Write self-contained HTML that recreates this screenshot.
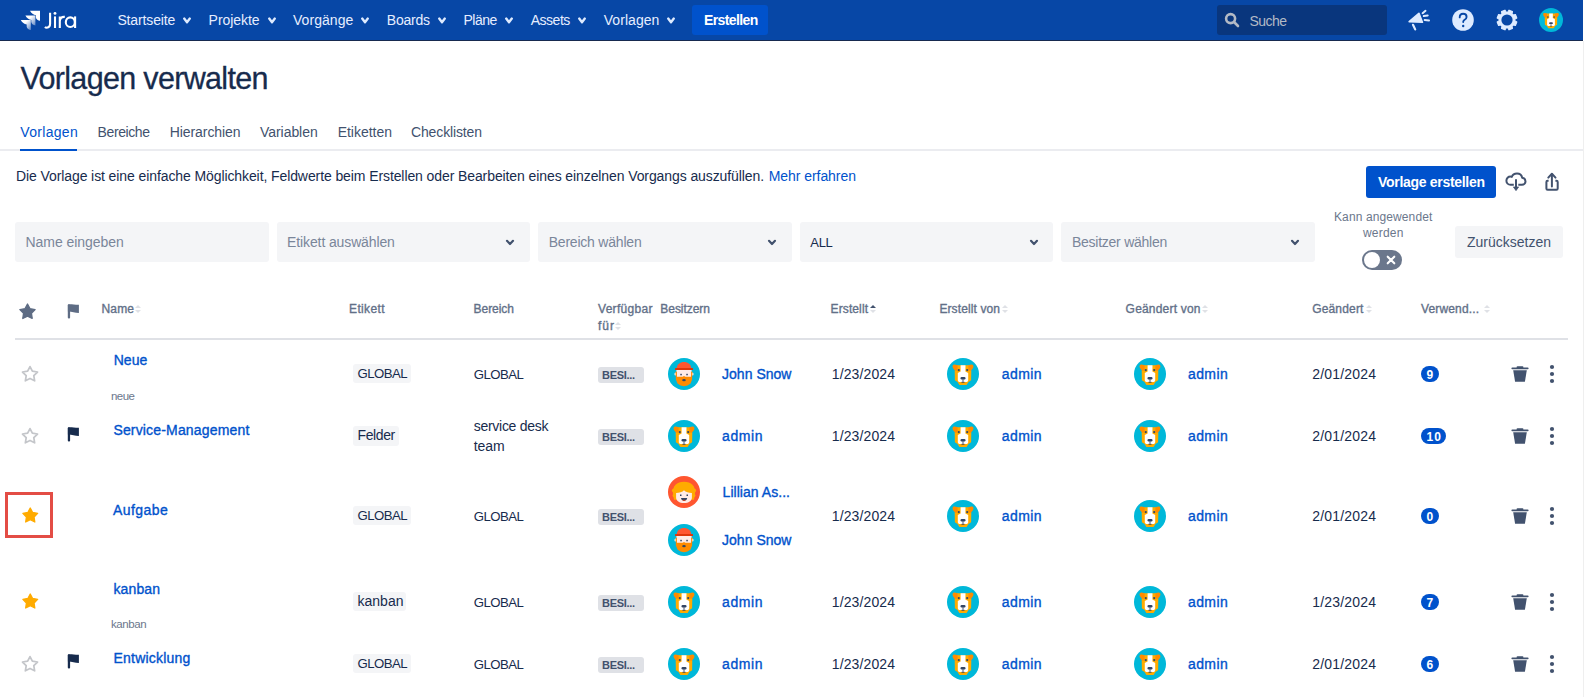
<!DOCTYPE html>
<html><head><meta charset="utf-8"><title>Vorlagen verwalten</title>
<style>
html,body{margin:0;padding:0;background:#fff;}
body{width:1584px;height:697px;overflow:hidden;position:relative;font-family:"Liberation Sans", sans-serif;}
.t{position:absolute;white-space:nowrap;}
.b{position:absolute;}
.s{position:absolute;overflow:visible;}
</style></head><body>
<div class="b" style="left:0px;top:0px;width:1583px;height:40px;background:#0747A6;border-radius:0px;"></div>
<div class="b" style="left:0px;top:40px;width:1583px;height:1px;background:#172A4F;border-radius:0px;"></div>
<div class="b" style="left:1583px;top:41px;width:1px;height:656px;background:#EFEFEF;border-radius:0px;"></div>
<svg class="s" style="left:20px;top:10px;" width="22" height="22" viewBox="0 0 22 22">
<defs><linearGradient id="lg" x1="1" y1="1" x2="0" y2="0"><stop offset="0" stop-color="#fff" stop-opacity="0.35"/><stop offset="0.65" stop-color="#fff"/></linearGradient></defs>
<path transform="translate(10 0.8)" d="M0 0 H10 V10 C8.3 9.8 6 8.6 5.9 6.6 V4.4 C3.6 4 1.2 2.4 0 0 Z" fill="#fff"/>
<path transform="translate(5.4 5.5)" d="M0 0 H10 V10 C8.3 9.8 6 8.6 5.9 6.6 V4.4 C3.6 4 1.2 2.4 0 0 Z" fill="url(#lg)"/>
<path transform="translate(0.8 10.1)" d="M0 0 H10 V10 C8.3 9.8 6 8.6 5.9 6.6 V4.4 C3.6 4 1.2 2.4 0 0 Z" fill="url(#lg)"/>
</svg>
<svg class="s" style="left:40px;top:8px;" width="40" height="24" viewBox="0 0 40 24"><g transform="translate(-40 -8)" fill="none" stroke="#FFFFFF" stroke-width="2.1">
<path d="M50.1 12.8 V23.6 C50.1 26.3 48.7 27.7 46.8 27.7 C46 27.7 45.4 27.4 44.9 26.9"/>
<path d="M55 16.4 V28"/>
<path d="M59.8 16.4 V28 M59.8 21.6 C59.8 18.2 61.6 16.6 64.8 16.9"/>
<ellipse cx="70.3" cy="22.2" rx="4.5" ry="4.85"/>
<path d="M75.1 16.4 V28"/>
</g><circle cx="15" cy="5.4" r="1.45" fill="#FFFFFF"/></svg>
<div class="t" style="left:117.4px;top:11.85px;font-size:14px;line-height:17px;color:#E6EEFF;letter-spacing:-0.127px;">Startseite</div>
<svg class="s" style="left:181px;top:14px;" width="12" height="12" viewBox="0 0 12 12"><path d="M3.2 4.6 L6 8.2 L8.8 4.6" fill="none" stroke="#DEEBFF" stroke-width="2.4" stroke-linecap="round" stroke-linejoin="round"/></svg>
<div class="t" style="left:208.6px;top:11.85px;font-size:14px;line-height:17px;color:#E6EEFF;letter-spacing:-0.051px;">Projekte</div>
<svg class="s" style="left:265.5px;top:14px;" width="12" height="12" viewBox="0 0 12 12"><path d="M3.2 4.6 L6 8.2 L8.8 4.6" fill="none" stroke="#DEEBFF" stroke-width="2.4" stroke-linecap="round" stroke-linejoin="round"/></svg>
<div class="t" style="left:292.9px;top:11.85px;font-size:14px;line-height:17px;color:#E6EEFF;letter-spacing:0.078px;">Vorgänge</div>
<svg class="s" style="left:359.3px;top:14px;" width="12" height="12" viewBox="0 0 12 12"><path d="M3.2 4.6 L6 8.2 L8.8 4.6" fill="none" stroke="#DEEBFF" stroke-width="2.4" stroke-linecap="round" stroke-linejoin="round"/></svg>
<div class="t" style="left:386.8px;top:11.85px;font-size:14px;line-height:17px;color:#E6EEFF;letter-spacing:-0.232px;">Boards</div>
<svg class="s" style="left:435.5px;top:14px;" width="12" height="12" viewBox="0 0 12 12"><path d="M3.2 4.6 L6 8.2 L8.8 4.6" fill="none" stroke="#DEEBFF" stroke-width="2.4" stroke-linecap="round" stroke-linejoin="round"/></svg>
<div class="t" style="left:463.5px;top:11.85px;font-size:14px;line-height:17px;color:#E6EEFF;letter-spacing:-0.478px;">Pläne</div>
<svg class="s" style="left:503px;top:14px;" width="12" height="12" viewBox="0 0 12 12"><path d="M3.2 4.6 L6 8.2 L8.8 4.6" fill="none" stroke="#DEEBFF" stroke-width="2.4" stroke-linecap="round" stroke-linejoin="round"/></svg>
<div class="t" style="left:530.7px;top:11.85px;font-size:14px;line-height:17px;color:#E6EEFF;letter-spacing:-0.483px;">Assets</div>
<svg class="s" style="left:576px;top:14px;" width="12" height="12" viewBox="0 0 12 12"><path d="M3.2 4.6 L6 8.2 L8.8 4.6" fill="none" stroke="#DEEBFF" stroke-width="2.4" stroke-linecap="round" stroke-linejoin="round"/></svg>
<div class="t" style="left:603.7px;top:11.85px;font-size:14px;line-height:17px;color:#E6EEFF;letter-spacing:0.06px;">Vorlagen</div>
<svg class="s" style="left:665px;top:14px;" width="12" height="12" viewBox="0 0 12 12"><path d="M3.2 4.6 L6 8.2 L8.8 4.6" fill="none" stroke="#DEEBFF" stroke-width="2.4" stroke-linecap="round" stroke-linejoin="round"/></svg>
<div class="b" style="left:692px;top:5px;width:76px;height:30px;background:#0052CC;border-radius:3px;"></div>
<div class="t" style="left:704px;top:12.05px;font-size:14px;line-height:17px;color:#FFFFFF;font-weight:700;letter-spacing:-0.605px;">Erstellen</div>
<div class="b" style="left:1217px;top:5px;width:170px;height:30px;background:#09367D;border-radius:3px;"></div>
<svg class="s" style="left:1224px;top:12px;" width="16" height="16" viewBox="0 0 16 16"><circle cx="6.6" cy="6.6" r="4.5" fill="none" stroke="#B3BAC5" stroke-width="2.6"/><path d="M10 10 L14 14" stroke="#B3BAC5" stroke-width="2.6" stroke-linecap="round"/></svg>
<div class="t" style="left:1249.6px;top:13.25px;font-size:14px;line-height:17px;color:#B3BAC5;letter-spacing:-0.576px;">Suche</div>
<svg class="s" style="left:1404px;top:6px;" width="30" height="28" viewBox="0 0 30 28"><path d="M5.2 15.6 L14.9 7.4 L18.4 16.2 Z" fill="#DEEBFF" stroke="#DEEBFF" stroke-width="1.7" stroke-linejoin="round"/>
<path d="M9 18.8 L11.2 23.4" stroke="#DEEBFF" stroke-width="2.2" stroke-linecap="round"/>
<path d="M18.6 7.2 L21.5 4.8 M19.8 10.1 L23.7 9.5 M20.7 14 L25 14.4" stroke="#DEEBFF" stroke-width="2" stroke-linecap="round"/></svg>
<svg class="s" style="left:1452px;top:9px;" width="22" height="22" viewBox="0 0 22 22"><circle cx="11" cy="11" r="10.8" fill="#DEEBFF"/>
<path d="M7.7 8.4 C7.7 6.1 9.2 4.7 11.1 4.7 C13.1 4.7 14.6 6.1 14.6 7.9 C14.6 9.6 13.3 10.4 12.3 11 C11.5 11.5 11.2 12.1 11.2 12.9 V13.1" fill="none" stroke="#0747A6" stroke-width="1.85" stroke-linecap="round"/>
<circle cx="11.2" cy="17" r="1.2" fill="#0747A6"/></svg>
<svg class="s" style="left:1496px;top:9px;" width="22" height="22" viewBox="0 0 22 22"><path d="M18.77 11.67 L20.78 13.10 L19.40 16.42 L16.97 16.02 L16.02 16.97 L16.42 19.40 L13.10 20.78 L11.67 18.77 L10.33 18.77 L8.90 20.78 L5.58 19.40 L5.98 16.97 L5.03 16.02 L2.60 16.42 L1.22 13.10 L3.23 11.67 L3.23 10.33 L1.22 8.90 L2.60 5.58 L5.03 5.98 L5.98 5.03 L5.58 2.60 L8.90 1.22 L10.33 3.23 L11.67 3.23 L13.10 1.22 L16.42 2.60 L16.02 5.03 L16.97 5.98 L19.40 5.58 L20.78 8.90 L18.77 10.33 Z" fill="#DEEBFF" stroke="#DEEBFF" stroke-width="1.2" stroke-linejoin="round"/><circle cx="11" cy="11" r="8.0" fill="#DEEBFF"/><circle cx="11" cy="11" r="5.6" fill="#0747A6"/></svg>
<svg class="s" style="left:1539px;top:8px;" width="24" height="24" viewBox="0 0 32 32"><circle cx="16" cy="16" r="16" fill="#00B8D9"/>
<path d="M9 7.2 H23 L24.3 13 L24.1 22.3 L21.5 24 L19.6 26.9 H12.4 L10.5 24 L7.9 22.3 L7.7 13 Z" fill="#FFAB00"/>
<path d="M5.6 8.5 C5.5 7.2 6.5 6.4 7.7 6.6 L10.6 7.2 L10.6 12.6 L8.3 12.8 C6.8 11.6 5.8 10.1 5.6 8.5 Z" fill="#FF8B00"/>
<path d="M26.4 8.5 C26.5 7.2 25.5 6.4 24.3 6.6 L21.4 7.2 L21.4 12.6 L23.7 12.8 C25.2 11.6 26.2 10.1 26.4 8.5 Z" fill="#FF8B00"/>
<path d="M13.6 7.2 H18.5 L18.4 13.4 L21.2 14.9 V22.6 L20.2 24.1 H11.8 L10.8 22.6 V14.9 L13.6 13.4 Z" fill="#FFFFFF"/>
<circle cx="11.8" cy="12.1" r="1.1" fill="#344563"/><circle cx="20.2" cy="12.1" r="1.1" fill="#344563"/>
<rect x="13.5" y="18.9" width="5" height="2.5" rx="1.2" fill="#344563"/>
<path d="M16 21.2 V23.8 M14.5 24.3 H17.5" stroke="#344563" stroke-width="0.9"/></svg>
<div class="t" style="left:20.5px;top:60.33px;font-size:30.5px;line-height:37px;color:#172B4D;letter-spacing:-0.672px;-webkit-text-stroke:0.3px #172B4D;">Vorlagen verwalten</div>
<div class="t" style="left:20.3px;top:123.65px;font-size:14px;line-height:17px;color:#0052CC;letter-spacing:0.303px;">Vorlagen</div>
<div class="t" style="left:97.6px;top:123.65px;font-size:14px;line-height:17px;color:#42526E;letter-spacing:-0.409px;">Bereiche</div>
<div class="t" style="left:169.8px;top:123.65px;font-size:14px;line-height:17px;color:#42526E;letter-spacing:-0.089px;">Hierarchien</div>
<div class="t" style="left:260px;top:123.65px;font-size:14px;line-height:17px;color:#42526E;letter-spacing:-0.053px;">Variablen</div>
<div class="t" style="left:337.7px;top:123.65px;font-size:14px;line-height:17px;color:#42526E;letter-spacing:-0.023px;">Etiketten</div>
<div class="t" style="left:411px;top:123.65px;font-size:14px;line-height:17px;color:#42526E;letter-spacing:-0.138px;">Checklisten</div>
<div class="b" style="left:0px;top:149px;width:1583px;height:2px;background:#EBECF0;border-radius:0px;"></div>
<div class="b" style="left:20px;top:149px;width:57px;height:2px;background:#0052CC;border-radius:0px;"></div>
<div class="t" style="left:16px;top:167.65px;font-size:14px;line-height:17px;color:#172B4D;letter-spacing:-0.096px;">Die Vorlage ist eine einfache Möglichkeit, Feldwerte beim Erstellen oder Bearbeiten eines einzelnen Vorgangs auszufüllen.</div>
<div class="t" style="left:768.7px;top:167.65px;font-size:14px;line-height:17px;color:#0052CC;letter-spacing:-0.053px;">Mehr erfahren</div>
<div class="b" style="left:1366px;top:166px;width:130px;height:32px;background:#0052CC;border-radius:3px;"></div>
<div class="t" style="left:1378px;top:173.65px;font-size:14px;line-height:17px;color:#FFFFFF;font-weight:700;letter-spacing:-0.3px;">Vorlage erstellen</div>
<svg class="s" style="left:1504px;top:170px;" width="24" height="24" viewBox="0 0 24 24"><path d="M9.8 14.8 H6.5 C4.2 14.8 2.4 13 2.4 10.7 C2.4 8.4 4.2 6.6 6.5 6.6 C7 6.6 7.4 6.7 7.8 6.9 C8.5 4.9 10.5 3.6 13 3.6 C15.6 3.6 17.7 5.4 18.2 7.8 C20.1 8.1 21.5 9.6 21.5 11.4 C21.5 13.3 19.9 14.8 18 14.8 H14.3" fill="none" stroke="#42526E" stroke-width="2" stroke-linejoin="round"/>
<path d="M12 9.3 V17.6" stroke="#42526E" stroke-width="2"/><path d="M9.3 16.9 H14.7 L12 20.7 Z" fill="#42526E" stroke="#42526E" stroke-width="0.6" stroke-linejoin="round"/></svg>
<svg class="s" style="left:1540px;top:170px;" width="24" height="24" viewBox="0 0 24 24"><path d="M8.6 10.8 H7.6 C7 10.8 6.4 11.3 6.4 12 V18.6 C6.4 19.3 7 19.8 7.6 19.8 H16.5 C17.2 19.8 17.7 19.3 17.7 18.6 V12 C17.7 11.3 17.2 10.8 16.5 10.8 H15.4" fill="none" stroke="#42526E" stroke-width="2" stroke-linecap="butt" stroke-linejoin="round"/>
<path d="M11.9 4.6 V16.4" stroke="#42526E" stroke-width="2" stroke-linecap="round"/><path d="M8.3 7.6 L11.9 3.8 L15.5 7.6" fill="none" stroke="#42526E" stroke-width="2" stroke-linecap="round" stroke-linejoin="round"/></svg>
<div class="b" style="left:15px;top:222px;width:253.6px;height:40px;background:#F4F5F7;border-radius:3px;"></div>
<div class="t" style="left:25.5px;top:233.65px;font-size:14px;line-height:17px;color:#7A869A;letter-spacing:-0.038px;">Name eingeben</div>
<div class="b" style="left:276.6px;top:222px;width:253.6px;height:40px;background:#F4F5F7;border-radius:3px;"></div>
<div class="t" style="left:287.1px;top:233.65px;font-size:14px;line-height:17px;color:#7A869A;letter-spacing:-0.121px;">Etikett auswählen</div>
<svg class="s" style="left:504.40000000000003px;top:236.3px;" width="12" height="12" viewBox="0 0 12 12"><path d="M3.0 4.800000000000001 L6 8.0 L9.0 4.800000000000001" fill="none" stroke="#42526E" stroke-width="2.2" stroke-linecap="round" stroke-linejoin="round"/></svg>
<div class="b" style="left:538.2px;top:222px;width:253.6px;height:40px;background:#F4F5F7;border-radius:3px;"></div>
<div class="t" style="left:548.7px;top:233.65px;font-size:14px;line-height:17px;color:#7A869A;letter-spacing:-0.21px;">Bereich wählen</div>
<svg class="s" style="left:766.0px;top:236.3px;" width="12" height="12" viewBox="0 0 12 12"><path d="M3.0 4.800000000000001 L6 8.0 L9.0 4.800000000000001" fill="none" stroke="#42526E" stroke-width="2.2" stroke-linecap="round" stroke-linejoin="round"/></svg>
<div class="b" style="left:799.8px;top:222px;width:253.6px;height:40px;background:#F4F5F7;border-radius:3px;"></div>
<div class="t" style="left:810.3px;top:234.50px;font-size:13px;line-height:16px;color:#172B4D;letter-spacing:-0.32px;">ALL</div>
<svg class="s" style="left:1027.6px;top:236.3px;" width="12" height="12" viewBox="0 0 12 12"><path d="M3.0 4.800000000000001 L6 8.0 L9.0 4.800000000000001" fill="none" stroke="#42526E" stroke-width="2.2" stroke-linecap="round" stroke-linejoin="round"/></svg>
<div class="b" style="left:1061.4px;top:222px;width:253.6px;height:40px;background:#F4F5F7;border-radius:3px;"></div>
<div class="t" style="left:1071.9px;top:233.65px;font-size:14px;line-height:17px;color:#7A869A;letter-spacing:-0.245px;">Besitzer wählen</div>
<svg class="s" style="left:1289.2px;top:236.3px;" width="12" height="12" viewBox="0 0 12 12"><path d="M3.0 4.800000000000001 L6 8.0 L9.0 4.800000000000001" fill="none" stroke="#42526E" stroke-width="2.2" stroke-linecap="round" stroke-linejoin="round"/></svg>
<div class="t" style="left:1334px;top:209.54px;font-size:12px;line-height:14px;color:#6B778C;letter-spacing:0.111px;">Kann angewendet</div>
<div class="t" style="left:1363px;top:226.14px;font-size:12px;line-height:14px;color:#6B778C;letter-spacing:0.208px;">werden</div>
<div class="b" style="left:1362px;top:250px;width:40px;height:20px;background:#6B778C;border-radius:10px;"></div>
<div class="b" style="left:1364px;top:252px;width:16px;height:16px;background:#FFFFFF;border-radius:8px;"></div>
<svg class="s" style="left:1385px;top:254px;" width="12" height="12" viewBox="0 0 12 12"><path d="M2.7 2.7 L9.3 9.3 M9.3 2.7 L2.7 9.3" stroke="#FFFFFF" stroke-width="2.1" stroke-linecap="round"/></svg>
<div class="b" style="left:1455px;top:226px;width:108px;height:32px;background:#F4F5F7;border-radius:3px;"></div>
<div class="t" style="left:1467px;top:233.95px;font-size:14px;line-height:17px;color:#42526E;letter-spacing:-0.004px;">Zurücksetzen</div>
<svg class="s" style="left:18.5px;top:303.3px;" width="17" height="17" viewBox="0 0 17 17"><path d="M8.50 1.01 L10.95 5.63 L16.10 6.53 L12.46 10.29 L13.20 15.46 L8.50 13.16 L3.80 15.46 L4.54 10.29 L0.90 6.53 L6.05 5.63 Z" fill="#5E6C84" stroke="#5E6C84" stroke-width="1.3" stroke-linejoin="round"/></svg>
<svg class="s" style="left:67px;top:304px;" width="13" height="16" viewBox="0 0 13 16"><rect x="0.8" y="0.4" width="2.3" height="14" rx="1" fill="#5E6C84"/><path d="M0.9 0.4 C4 0 8 0.9 11.9 0.8 V8.9 C8 8.9 4.5 7.4 0.9 7.5 Z" fill="#5E6C84"/></svg>
<div class="t" style="left:101.5px;top:301.84px;font-size:12px;line-height:14px;color:#627088;-webkit-text-stroke:0.35px #627088;letter-spacing:0.161px;">Name</div>
<svg class="s" style="left:135.3px;top:305px;" width="6" height="8" viewBox="0 0 6 8"><path d="M0 3 L3 0 L6 3Z" fill="#DFE1E6"/><path d="M0 5 L3 8 L6 5Z" fill="#DFE1E6"/></svg>
<div class="t" style="left:349px;top:301.84px;font-size:12px;line-height:14px;color:#627088;-webkit-text-stroke:0.35px #627088;letter-spacing:0.373px;">Etikett</div>
<div class="t" style="left:473.6px;top:301.84px;font-size:12px;line-height:14px;color:#627088;-webkit-text-stroke:0.35px #627088;letter-spacing:-0.048px;">Bereich</div>
<div class="t" style="left:598px;top:301.84px;font-size:12px;line-height:14px;color:#627088;-webkit-text-stroke:0.35px #627088;letter-spacing:0.294px;">Verfügbar</div>
<div class="t" style="left:660.3px;top:301.84px;font-size:12px;line-height:14px;color:#627088;-webkit-text-stroke:0.35px #627088;letter-spacing:-0.041px;">Besitzern</div>
<div class="t" style="left:830.6px;top:301.84px;font-size:12px;line-height:14px;color:#627088;-webkit-text-stroke:0.35px #627088;letter-spacing:0.102px;">Erstellt</div>
<svg class="s" style="left:870px;top:305px;" width="6" height="8" viewBox="0 0 6 8"><path d="M0 3 L3 0 L6 3Z" fill="#42526E"/><path d="M0 5 L3 8 L6 5Z" fill="#DFE1E6"/></svg>
<div class="t" style="left:939.4px;top:301.84px;font-size:12px;line-height:14px;color:#627088;-webkit-text-stroke:0.35px #627088;letter-spacing:0.113px;">Erstellt von</div>
<svg class="s" style="left:1001.5px;top:305px;" width="6" height="8" viewBox="0 0 6 8"><path d="M0 3 L3 0 L6 3Z" fill="#DFE1E6"/><path d="M0 5 L3 8 L6 5Z" fill="#DFE1E6"/></svg>
<div class="t" style="left:1125.6px;top:301.84px;font-size:12px;line-height:14px;color:#627088;-webkit-text-stroke:0.35px #627088;letter-spacing:0.198px;">Geändert von</div>
<svg class="s" style="left:1202px;top:305px;" width="6" height="8" viewBox="0 0 6 8"><path d="M0 3 L3 0 L6 3Z" fill="#DFE1E6"/><path d="M0 5 L3 8 L6 5Z" fill="#DFE1E6"/></svg>
<div class="t" style="left:1312.2px;top:301.84px;font-size:12px;line-height:14px;color:#627088;-webkit-text-stroke:0.35px #627088;letter-spacing:0.165px;">Geändert</div>
<svg class="s" style="left:1365.5px;top:305px;" width="6" height="8" viewBox="0 0 6 8"><path d="M0 3 L3 0 L6 3Z" fill="#DFE1E6"/><path d="M0 5 L3 8 L6 5Z" fill="#DFE1E6"/></svg>
<div class="t" style="left:1421px;top:301.84px;font-size:12px;line-height:14px;color:#627088;-webkit-text-stroke:0.35px #627088;letter-spacing:0.144px;">Verwend...</div>
<svg class="s" style="left:1484px;top:305px;" width="6" height="8" viewBox="0 0 6 8"><path d="M0 3 L3 0 L6 3Z" fill="#DFE1E6"/><path d="M0 5 L3 8 L6 5Z" fill="#DFE1E6"/></svg>
<div class="t" style="left:598px;top:319.14px;font-size:12px;line-height:14px;color:#627088;-webkit-text-stroke:0.35px #627088;letter-spacing:0.992px;">für</div>
<svg class="s" style="left:615px;top:322px;" width="6" height="8" viewBox="0 0 6 8"><path d="M0 3 L3 0 L6 3Z" fill="#DFE1E6"/><path d="M0 5 L3 8 L6 5Z" fill="#DFE1E6"/></svg>
<div class="b" style="left:15px;top:338px;width:1553px;height:2px;background:#DFE1E6;border-radius:0px;"></div>
<svg class="s" style="left:20.9px;top:365.3px;" width="18" height="18" viewBox="0 0 18 18"><path d="M9.00 1.55 L11.35 6.21 L16.51 7.01 L12.80 10.69 L13.64 15.84 L9.00 13.45 L4.36 15.84 L5.20 10.69 L1.49 7.01 L6.65 6.21 Z" fill="none" stroke="#C4C6CA" stroke-width="1.75" stroke-linejoin="round"/></svg>
<div class="t" style="left:113.7px;top:351.65px;font-size:14px;line-height:17px;color:#0052CC;-webkit-text-stroke:0.35px #0052CC;letter-spacing:0.077px;">Neue</div>
<div class="t" style="left:111px;top:388.72px;font-size:11.5px;line-height:14px;color:#6B778C;letter-spacing:-0.531px;">neue</div>
<div class="b" style="left:353px;top:364px;width:58px;height:19px;background:#F4F5F7;border-radius:3px;"></div>
<div class="t" style="left:357.5px;top:365.93px;font-size:13.2px;line-height:16px;color:#172B4D;letter-spacing:-0.516px;">GLOBAL</div>
<div class="t" style="left:473.7px;top:367.03px;font-size:13.2px;line-height:16px;color:#172B4D;letter-spacing:-0.536px;">GLOBAL</div>
<div class="b" style="left:598px;top:367px;width:46px;height:16px;background:#DFE1E6;border-radius:3px;"></div>
<div class="t" style="left:602px;top:368.69px;font-size:11px;line-height:13px;color:#42526E;font-weight:700;letter-spacing:-0.307px;">BESI...</div>
<svg class="s" style="left:668px;top:358px;" width="32" height="32" viewBox="0 0 32 32"><circle cx="16" cy="16" r="16" fill="#00B8D9"/>
<ellipse cx="7.7" cy="16" rx="1.3" ry="1.6" fill="#FFEBE6"/><ellipse cx="24.3" cy="16" rx="1.3" ry="1.6" fill="#FFEBE6"/>
<rect x="8.4" y="11.5" width="15.2" height="8" fill="#FFEBE6"/>
<path d="M7.6 13.5 L7.9 21.5 L9.5 25.5 L12.5 27.6 L16 28.3 L19.5 27.6 L22.5 25.5 L24.1 21.5 L24.4 13.5 L23.1 13.8 L23.1 18.7 L17.4 18.7 L16 18 L14.6 18.7 L8.9 18.7 L8.9 13.8 Z" fill="#FF8B00"/>
<path d="M8.6 10.8 C9 6 12 3.9 16 3.9 C20 3.9 23 6 23.4 10.8 Z" fill="#FF5630"/>
<rect x="7" y="10" width="18" height="2.1" rx="0.5" fill="#DE350B"/>
<rect x="12.3" y="15.8" width="1.5" height="1.5" fill="#344563"/><rect x="18.3" y="15.8" width="1.5" height="1.5" fill="#344563"/>
<ellipse cx="16" cy="22.2" rx="1.8" ry="1.1" fill="#344563"/></svg>
<div class="t" style="left:722px;top:365.95px;font-size:14px;line-height:17px;color:#0052CC;-webkit-text-stroke:0.35px #0052CC;letter-spacing:0.027px;">John Snow</div>
<div class="t" style="left:831.8px;top:366.25px;font-size:14px;line-height:17px;color:#172B4D;letter-spacing:0.113px;">1/23/2024</div>
<svg class="s" style="left:947px;top:358px;" width="32" height="32" viewBox="0 0 32 32"><circle cx="16" cy="16" r="16" fill="#00B8D9"/>
<path d="M9 7.2 H23 L24.3 13 L24.1 22.3 L21.5 24 L19.6 26.9 H12.4 L10.5 24 L7.9 22.3 L7.7 13 Z" fill="#FFAB00"/>
<path d="M5.6 8.5 C5.5 7.2 6.5 6.4 7.7 6.6 L10.6 7.2 L10.6 12.6 L8.3 12.8 C6.8 11.6 5.8 10.1 5.6 8.5 Z" fill="#FF8B00"/>
<path d="M26.4 8.5 C26.5 7.2 25.5 6.4 24.3 6.6 L21.4 7.2 L21.4 12.6 L23.7 12.8 C25.2 11.6 26.2 10.1 26.4 8.5 Z" fill="#FF8B00"/>
<path d="M13.6 7.2 H18.5 L18.4 13.4 L21.2 14.9 V22.6 L20.2 24.1 H11.8 L10.8 22.6 V14.9 L13.6 13.4 Z" fill="#FFFFFF"/>
<circle cx="11.8" cy="12.1" r="1.1" fill="#344563"/><circle cx="20.2" cy="12.1" r="1.1" fill="#344563"/>
<rect x="13.5" y="18.9" width="5" height="2.5" rx="1.2" fill="#344563"/>
<path d="M16 21.2 V23.8 M14.5 24.3 H17.5" stroke="#344563" stroke-width="0.9"/></svg>
<div class="t" style="left:1001.8px;top:366.25px;font-size:14px;line-height:17px;color:#0052CC;-webkit-text-stroke:0.35px #0052CC;letter-spacing:0.39px;">admin</div>
<svg class="s" style="left:1134px;top:358px;" width="32" height="32" viewBox="0 0 32 32"><circle cx="16" cy="16" r="16" fill="#00B8D9"/>
<path d="M9 7.2 H23 L24.3 13 L24.1 22.3 L21.5 24 L19.6 26.9 H12.4 L10.5 24 L7.9 22.3 L7.7 13 Z" fill="#FFAB00"/>
<path d="M5.6 8.5 C5.5 7.2 6.5 6.4 7.7 6.6 L10.6 7.2 L10.6 12.6 L8.3 12.8 C6.8 11.6 5.8 10.1 5.6 8.5 Z" fill="#FF8B00"/>
<path d="M26.4 8.5 C26.5 7.2 25.5 6.4 24.3 6.6 L21.4 7.2 L21.4 12.6 L23.7 12.8 C25.2 11.6 26.2 10.1 26.4 8.5 Z" fill="#FF8B00"/>
<path d="M13.6 7.2 H18.5 L18.4 13.4 L21.2 14.9 V22.6 L20.2 24.1 H11.8 L10.8 22.6 V14.9 L13.6 13.4 Z" fill="#FFFFFF"/>
<circle cx="11.8" cy="12.1" r="1.1" fill="#344563"/><circle cx="20.2" cy="12.1" r="1.1" fill="#344563"/>
<rect x="13.5" y="18.9" width="5" height="2.5" rx="1.2" fill="#344563"/>
<path d="M16 21.2 V23.8 M14.5 24.3 H17.5" stroke="#344563" stroke-width="0.9"/></svg>
<div class="t" style="left:1188px;top:366.25px;font-size:14px;line-height:17px;color:#0052CC;-webkit-text-stroke:0.35px #0052CC;letter-spacing:0.39px;">admin</div>
<div class="t" style="left:1312.3px;top:366.25px;font-size:14px;line-height:17px;color:#172B4D;letter-spacing:0.175px;">2/01/2024</div>
<div class="b" style="left:1421px;top:366px;width:18px;height:16px;background:#0052CC;border-radius:8px;"></div>
<div class="t" style="left:1426.5px;top:367.84px;font-size:12px;line-height:14px;color:#FFFFFF;font-weight:700;letter-spacing:0.812px;">9</div>
<svg class="s" style="left:1511px;top:365px;" width="18" height="18" viewBox="0 0 18 18"><path d="M1.3 3.3 H16.7" stroke="#42526E" stroke-width="1.8" stroke-linecap="round"/><path d="M6.5 2.3 H11.5" stroke="#42526E" stroke-width="1.9" stroke-linecap="round"/><path d="M2.2 5.3 H15.8 L13.9 16.8 H4.1 Z" fill="#42526E"/></svg>
<svg class="s" style="left:1549px;top:364px;" width="6" height="20" viewBox="0 0 6 20"><circle cx="3" cy="3" r="2.1" fill="#42526E"/><circle cx="3" cy="10" r="2.1" fill="#42526E"/><circle cx="3" cy="17" r="2.1" fill="#42526E"/></svg>
<svg class="s" style="left:20.9px;top:427.1px;" width="18" height="18" viewBox="0 0 18 18"><path d="M9.00 1.55 L11.35 6.21 L16.51 7.01 L12.80 10.69 L13.64 15.84 L9.00 13.45 L4.36 15.84 L5.20 10.69 L1.49 7.01 L6.65 6.21 Z" fill="none" stroke="#C4C6CA" stroke-width="1.75" stroke-linejoin="round"/></svg>
<svg class="s" style="left:67px;top:426.5px;" width="13" height="16" viewBox="0 0 13 16"><rect x="0.8" y="0.4" width="2.3" height="14" rx="1" fill="#172B4D"/><path d="M0.9 0.4 C4 0 8 0.9 11.9 0.8 V8.9 C8 8.9 4.5 7.4 0.9 7.5 Z" fill="#172B4D"/></svg>
<div class="t" style="left:113.4px;top:421.65px;font-size:14px;line-height:17px;color:#0052CC;-webkit-text-stroke:0.35px #0052CC;letter-spacing:0.167px;">Service-Management</div>
<div class="b" style="left:353px;top:426px;width:46px;height:20px;background:#F4F5F7;border-radius:3px;"></div>
<div class="t" style="left:357.5px;top:427.25px;font-size:14px;line-height:17px;color:#172B4D;letter-spacing:-0.397px;">Felder</div>
<div class="t" style="left:473.7px;top:417.65px;font-size:14px;line-height:17px;color:#172B4D;letter-spacing:-0.274px;">service desk</div>
<div class="t" style="left:473.7px;top:437.65px;font-size:14px;line-height:17px;color:#172B4D;letter-spacing:-0.042px;">team</div>
<div class="b" style="left:598px;top:429px;width:46px;height:16px;background:#DFE1E6;border-radius:3px;"></div>
<div class="t" style="left:602px;top:430.69px;font-size:11px;line-height:13px;color:#42526E;font-weight:700;letter-spacing:-0.307px;">BESI...</div>
<svg class="s" style="left:668px;top:420px;" width="32" height="32" viewBox="0 0 32 32"><circle cx="16" cy="16" r="16" fill="#00B8D9"/>
<path d="M9 7.2 H23 L24.3 13 L24.1 22.3 L21.5 24 L19.6 26.9 H12.4 L10.5 24 L7.9 22.3 L7.7 13 Z" fill="#FFAB00"/>
<path d="M5.6 8.5 C5.5 7.2 6.5 6.4 7.7 6.6 L10.6 7.2 L10.6 12.6 L8.3 12.8 C6.8 11.6 5.8 10.1 5.6 8.5 Z" fill="#FF8B00"/>
<path d="M26.4 8.5 C26.5 7.2 25.5 6.4 24.3 6.6 L21.4 7.2 L21.4 12.6 L23.7 12.8 C25.2 11.6 26.2 10.1 26.4 8.5 Z" fill="#FF8B00"/>
<path d="M13.6 7.2 H18.5 L18.4 13.4 L21.2 14.9 V22.6 L20.2 24.1 H11.8 L10.8 22.6 V14.9 L13.6 13.4 Z" fill="#FFFFFF"/>
<circle cx="11.8" cy="12.1" r="1.1" fill="#344563"/><circle cx="20.2" cy="12.1" r="1.1" fill="#344563"/>
<rect x="13.5" y="18.9" width="5" height="2.5" rx="1.2" fill="#344563"/>
<path d="M16 21.2 V23.8 M14.5 24.3 H17.5" stroke="#344563" stroke-width="0.9"/></svg>
<div class="t" style="left:722px;top:428.25px;font-size:14px;line-height:17px;color:#0052CC;-webkit-text-stroke:0.35px #0052CC;letter-spacing:0.615px;">admin</div>
<div class="t" style="left:831.8px;top:428.25px;font-size:14px;line-height:17px;color:#172B4D;letter-spacing:0.113px;">1/23/2024</div>
<svg class="s" style="left:947px;top:420px;" width="32" height="32" viewBox="0 0 32 32"><circle cx="16" cy="16" r="16" fill="#00B8D9"/>
<path d="M9 7.2 H23 L24.3 13 L24.1 22.3 L21.5 24 L19.6 26.9 H12.4 L10.5 24 L7.9 22.3 L7.7 13 Z" fill="#FFAB00"/>
<path d="M5.6 8.5 C5.5 7.2 6.5 6.4 7.7 6.6 L10.6 7.2 L10.6 12.6 L8.3 12.8 C6.8 11.6 5.8 10.1 5.6 8.5 Z" fill="#FF8B00"/>
<path d="M26.4 8.5 C26.5 7.2 25.5 6.4 24.3 6.6 L21.4 7.2 L21.4 12.6 L23.7 12.8 C25.2 11.6 26.2 10.1 26.4 8.5 Z" fill="#FF8B00"/>
<path d="M13.6 7.2 H18.5 L18.4 13.4 L21.2 14.9 V22.6 L20.2 24.1 H11.8 L10.8 22.6 V14.9 L13.6 13.4 Z" fill="#FFFFFF"/>
<circle cx="11.8" cy="12.1" r="1.1" fill="#344563"/><circle cx="20.2" cy="12.1" r="1.1" fill="#344563"/>
<rect x="13.5" y="18.9" width="5" height="2.5" rx="1.2" fill="#344563"/>
<path d="M16 21.2 V23.8 M14.5 24.3 H17.5" stroke="#344563" stroke-width="0.9"/></svg>
<div class="t" style="left:1001.8px;top:428.25px;font-size:14px;line-height:17px;color:#0052CC;-webkit-text-stroke:0.35px #0052CC;letter-spacing:0.39px;">admin</div>
<svg class="s" style="left:1134px;top:420px;" width="32" height="32" viewBox="0 0 32 32"><circle cx="16" cy="16" r="16" fill="#00B8D9"/>
<path d="M9 7.2 H23 L24.3 13 L24.1 22.3 L21.5 24 L19.6 26.9 H12.4 L10.5 24 L7.9 22.3 L7.7 13 Z" fill="#FFAB00"/>
<path d="M5.6 8.5 C5.5 7.2 6.5 6.4 7.7 6.6 L10.6 7.2 L10.6 12.6 L8.3 12.8 C6.8 11.6 5.8 10.1 5.6 8.5 Z" fill="#FF8B00"/>
<path d="M26.4 8.5 C26.5 7.2 25.5 6.4 24.3 6.6 L21.4 7.2 L21.4 12.6 L23.7 12.8 C25.2 11.6 26.2 10.1 26.4 8.5 Z" fill="#FF8B00"/>
<path d="M13.6 7.2 H18.5 L18.4 13.4 L21.2 14.9 V22.6 L20.2 24.1 H11.8 L10.8 22.6 V14.9 L13.6 13.4 Z" fill="#FFFFFF"/>
<circle cx="11.8" cy="12.1" r="1.1" fill="#344563"/><circle cx="20.2" cy="12.1" r="1.1" fill="#344563"/>
<rect x="13.5" y="18.9" width="5" height="2.5" rx="1.2" fill="#344563"/>
<path d="M16 21.2 V23.8 M14.5 24.3 H17.5" stroke="#344563" stroke-width="0.9"/></svg>
<div class="t" style="left:1188px;top:428.25px;font-size:14px;line-height:17px;color:#0052CC;-webkit-text-stroke:0.35px #0052CC;letter-spacing:0.39px;">admin</div>
<div class="t" style="left:1312.3px;top:428.25px;font-size:14px;line-height:17px;color:#172B4D;letter-spacing:0.175px;">2/01/2024</div>
<div class="b" style="left:1421px;top:428px;width:25px;height:16px;background:#0052CC;border-radius:8px;"></div>
<div class="t" style="left:1426.5px;top:429.84px;font-size:12px;line-height:14px;color:#FFFFFF;font-weight:700;letter-spacing:1.141px;">10</div>
<svg class="s" style="left:1511px;top:427px;" width="18" height="18" viewBox="0 0 18 18"><path d="M1.3 3.3 H16.7" stroke="#42526E" stroke-width="1.8" stroke-linecap="round"/><path d="M6.5 2.3 H11.5" stroke="#42526E" stroke-width="1.9" stroke-linecap="round"/><path d="M2.2 5.3 H15.8 L13.9 16.8 H4.1 Z" fill="#42526E"/></svg>
<svg class="s" style="left:1549px;top:426px;" width="6" height="20" viewBox="0 0 6 20"><circle cx="3" cy="3" r="2.1" fill="#42526E"/><circle cx="3" cy="10" r="2.1" fill="#42526E"/><circle cx="3" cy="17" r="2.1" fill="#42526E"/></svg>
<div class="b" style="left:5px;top:492px;width:48px;height:46px;background:transparent;border-radius:0px;border:3px solid #E34D45;box-sizing:border-box;"></div>
<svg class="s" style="left:21.9px;top:507.4px;" width="16.5" height="16.5" viewBox="0 0 16.5 16.5"><path d="M8.25 1.00 L10.63 5.48 L15.63 6.35 L12.09 10.00 L12.81 15.02 L8.25 12.79 L3.69 15.02 L4.41 10.00 L0.87 6.35 L5.87 5.48 Z" fill="#FFAB00" stroke="#FFAB00" stroke-width="1.3" stroke-linejoin="round"/></svg>
<div class="t" style="left:113px;top:501.65px;font-size:14px;line-height:17px;color:#0052CC;-webkit-text-stroke:0.35px #0052CC;letter-spacing:0.421px;">Aufgabe</div>
<div class="b" style="left:353px;top:506px;width:58px;height:19px;background:#F4F5F7;border-radius:3px;"></div>
<div class="t" style="left:357.5px;top:507.93px;font-size:13.2px;line-height:16px;color:#172B4D;letter-spacing:-0.516px;">GLOBAL</div>
<div class="t" style="left:473.7px;top:509.03px;font-size:13.2px;line-height:16px;color:#172B4D;letter-spacing:-0.536px;">GLOBAL</div>
<div class="b" style="left:598px;top:509px;width:46px;height:16px;background:#DFE1E6;border-radius:3px;"></div>
<div class="t" style="left:602px;top:510.69px;font-size:11px;line-height:13px;color:#42526E;font-weight:700;letter-spacing:-0.307px;">BESI...</div>
<svg class="s" style="left:668px;top:476px;" width="32" height="32" viewBox="0 0 32 32"><circle cx="16" cy="16" r="16" fill="#FF5630"/>
<path d="M4.9 17 C4.7 10 8.5 5.8 16 5.8 C23.5 5.8 27.3 10 27.1 17 L26 23.8 L6 23.8 Z" fill="#FFAB00"/>
<circle cx="6" cy="14.5" r="2.1" fill="#FFAB00"/><circle cx="26" cy="14.5" r="2.1" fill="#FFAB00"/>
<circle cx="6.6" cy="19.5" r="2" fill="#FFAB00"/><circle cx="25.4" cy="19.5" r="2" fill="#FFAB00"/>
<path d="M8.1 17.1 C11 17 14.5 16 16 14.3 C17.5 16 21 17 23.9 17.1 L23.9 21.5 C23.9 25 20.6 27 16 27 C11.4 27 8.1 25 8.1 21.5 Z" fill="#FFEBE6"/>
<rect x="12" y="18.5" width="1.5" height="1.5" fill="#344563"/><rect x="18.5" y="18.5" width="1.5" height="1.5" fill="#344563"/>
<path d="M13 22 H19.2 C19.2 23.6 17.8 24.7 16.1 24.7 C14.4 24.7 13 23.6 13 22 Z" fill="#344563"/>
<path d="M14.6 24.2 C15.3 23.6 16.9 23.6 17.6 24.2 C17.1 24.9 15.1 24.9 14.6 24.2 Z" fill="#DE350B"/></svg>
<div class="t" style="left:722.6px;top:484.05px;font-size:14px;line-height:17px;color:#0052CC;-webkit-text-stroke:0.35px #0052CC;letter-spacing:0.039px;">Lillian As...</div>
<svg class="s" style="left:668px;top:524px;" width="32" height="32" viewBox="0 0 32 32"><circle cx="16" cy="16" r="16" fill="#00B8D9"/>
<ellipse cx="7.7" cy="16" rx="1.3" ry="1.6" fill="#FFEBE6"/><ellipse cx="24.3" cy="16" rx="1.3" ry="1.6" fill="#FFEBE6"/>
<rect x="8.4" y="11.5" width="15.2" height="8" fill="#FFEBE6"/>
<path d="M7.6 13.5 L7.9 21.5 L9.5 25.5 L12.5 27.6 L16 28.3 L19.5 27.6 L22.5 25.5 L24.1 21.5 L24.4 13.5 L23.1 13.8 L23.1 18.7 L17.4 18.7 L16 18 L14.6 18.7 L8.9 18.7 L8.9 13.8 Z" fill="#FF8B00"/>
<path d="M8.6 10.8 C9 6 12 3.9 16 3.9 C20 3.9 23 6 23.4 10.8 Z" fill="#FF5630"/>
<rect x="7" y="10" width="18" height="2.1" rx="0.5" fill="#DE350B"/>
<rect x="12.3" y="15.8" width="1.5" height="1.5" fill="#344563"/><rect x="18.3" y="15.8" width="1.5" height="1.5" fill="#344563"/>
<ellipse cx="16" cy="22.2" rx="1.8" ry="1.1" fill="#344563"/></svg>
<div class="t" style="left:722px;top:531.95px;font-size:14px;line-height:17px;color:#0052CC;-webkit-text-stroke:0.35px #0052CC;letter-spacing:0.027px;">John Snow</div>
<div class="t" style="left:831.8px;top:508.25px;font-size:14px;line-height:17px;color:#172B4D;letter-spacing:0.113px;">1/23/2024</div>
<svg class="s" style="left:947px;top:500px;" width="32" height="32" viewBox="0 0 32 32"><circle cx="16" cy="16" r="16" fill="#00B8D9"/>
<path d="M9 7.2 H23 L24.3 13 L24.1 22.3 L21.5 24 L19.6 26.9 H12.4 L10.5 24 L7.9 22.3 L7.7 13 Z" fill="#FFAB00"/>
<path d="M5.6 8.5 C5.5 7.2 6.5 6.4 7.7 6.6 L10.6 7.2 L10.6 12.6 L8.3 12.8 C6.8 11.6 5.8 10.1 5.6 8.5 Z" fill="#FF8B00"/>
<path d="M26.4 8.5 C26.5 7.2 25.5 6.4 24.3 6.6 L21.4 7.2 L21.4 12.6 L23.7 12.8 C25.2 11.6 26.2 10.1 26.4 8.5 Z" fill="#FF8B00"/>
<path d="M13.6 7.2 H18.5 L18.4 13.4 L21.2 14.9 V22.6 L20.2 24.1 H11.8 L10.8 22.6 V14.9 L13.6 13.4 Z" fill="#FFFFFF"/>
<circle cx="11.8" cy="12.1" r="1.1" fill="#344563"/><circle cx="20.2" cy="12.1" r="1.1" fill="#344563"/>
<rect x="13.5" y="18.9" width="5" height="2.5" rx="1.2" fill="#344563"/>
<path d="M16 21.2 V23.8 M14.5 24.3 H17.5" stroke="#344563" stroke-width="0.9"/></svg>
<div class="t" style="left:1001.8px;top:508.25px;font-size:14px;line-height:17px;color:#0052CC;-webkit-text-stroke:0.35px #0052CC;letter-spacing:0.39px;">admin</div>
<svg class="s" style="left:1134px;top:500px;" width="32" height="32" viewBox="0 0 32 32"><circle cx="16" cy="16" r="16" fill="#00B8D9"/>
<path d="M9 7.2 H23 L24.3 13 L24.1 22.3 L21.5 24 L19.6 26.9 H12.4 L10.5 24 L7.9 22.3 L7.7 13 Z" fill="#FFAB00"/>
<path d="M5.6 8.5 C5.5 7.2 6.5 6.4 7.7 6.6 L10.6 7.2 L10.6 12.6 L8.3 12.8 C6.8 11.6 5.8 10.1 5.6 8.5 Z" fill="#FF8B00"/>
<path d="M26.4 8.5 C26.5 7.2 25.5 6.4 24.3 6.6 L21.4 7.2 L21.4 12.6 L23.7 12.8 C25.2 11.6 26.2 10.1 26.4 8.5 Z" fill="#FF8B00"/>
<path d="M13.6 7.2 H18.5 L18.4 13.4 L21.2 14.9 V22.6 L20.2 24.1 H11.8 L10.8 22.6 V14.9 L13.6 13.4 Z" fill="#FFFFFF"/>
<circle cx="11.8" cy="12.1" r="1.1" fill="#344563"/><circle cx="20.2" cy="12.1" r="1.1" fill="#344563"/>
<rect x="13.5" y="18.9" width="5" height="2.5" rx="1.2" fill="#344563"/>
<path d="M16 21.2 V23.8 M14.5 24.3 H17.5" stroke="#344563" stroke-width="0.9"/></svg>
<div class="t" style="left:1188px;top:508.25px;font-size:14px;line-height:17px;color:#0052CC;-webkit-text-stroke:0.35px #0052CC;letter-spacing:0.39px;">admin</div>
<div class="t" style="left:1312.3px;top:508.25px;font-size:14px;line-height:17px;color:#172B4D;letter-spacing:0.175px;">2/01/2024</div>
<div class="b" style="left:1421px;top:508px;width:18px;height:16px;background:#0052CC;border-radius:8px;"></div>
<div class="t" style="left:1426.5px;top:509.84px;font-size:12px;line-height:14px;color:#FFFFFF;font-weight:700;letter-spacing:0.812px;">0</div>
<svg class="s" style="left:1511px;top:507px;" width="18" height="18" viewBox="0 0 18 18"><path d="M1.3 3.3 H16.7" stroke="#42526E" stroke-width="1.8" stroke-linecap="round"/><path d="M6.5 2.3 H11.5" stroke="#42526E" stroke-width="1.9" stroke-linecap="round"/><path d="M2.2 5.3 H15.8 L13.9 16.8 H4.1 Z" fill="#42526E"/></svg>
<svg class="s" style="left:1549px;top:506px;" width="6" height="20" viewBox="0 0 6 20"><circle cx="3" cy="3" r="2.1" fill="#42526E"/><circle cx="3" cy="10" r="2.1" fill="#42526E"/><circle cx="3" cy="17" r="2.1" fill="#42526E"/></svg>
<svg class="s" style="left:21.9px;top:593.4px;" width="16.5" height="16.5" viewBox="0 0 16.5 16.5"><path d="M8.25 1.00 L10.63 5.48 L15.63 6.35 L12.09 10.00 L12.81 15.02 L8.25 12.79 L3.69 15.02 L4.41 10.00 L0.87 6.35 L5.87 5.48 Z" fill="#FFAB00" stroke="#FFAB00" stroke-width="1.3" stroke-linejoin="round"/></svg>
<div class="t" style="left:113.5px;top:580.65px;font-size:14px;line-height:17px;color:#0052CC;-webkit-text-stroke:0.35px #0052CC;letter-spacing:0.113px;">kanban</div>
<div class="t" style="left:111px;top:617.02px;font-size:11.5px;line-height:14px;color:#6B778C;letter-spacing:-0.407px;">kanban</div>
<div class="b" style="left:353px;top:592px;width:53px;height:19px;background:#F4F5F7;border-radius:3px;"></div>
<div class="t" style="left:357.5px;top:593.15px;font-size:14px;line-height:17px;color:#172B4D;letter-spacing:0.013px;">kanban</div>
<div class="t" style="left:473.7px;top:595.03px;font-size:13.2px;line-height:16px;color:#172B4D;letter-spacing:-0.536px;">GLOBAL</div>
<div class="b" style="left:598px;top:595px;width:46px;height:16px;background:#DFE1E6;border-radius:3px;"></div>
<div class="t" style="left:602px;top:596.69px;font-size:11px;line-height:13px;color:#42526E;font-weight:700;letter-spacing:-0.307px;">BESI...</div>
<svg class="s" style="left:668px;top:586px;" width="32" height="32" viewBox="0 0 32 32"><circle cx="16" cy="16" r="16" fill="#00B8D9"/>
<path d="M9 7.2 H23 L24.3 13 L24.1 22.3 L21.5 24 L19.6 26.9 H12.4 L10.5 24 L7.9 22.3 L7.7 13 Z" fill="#FFAB00"/>
<path d="M5.6 8.5 C5.5 7.2 6.5 6.4 7.7 6.6 L10.6 7.2 L10.6 12.6 L8.3 12.8 C6.8 11.6 5.8 10.1 5.6 8.5 Z" fill="#FF8B00"/>
<path d="M26.4 8.5 C26.5 7.2 25.5 6.4 24.3 6.6 L21.4 7.2 L21.4 12.6 L23.7 12.8 C25.2 11.6 26.2 10.1 26.4 8.5 Z" fill="#FF8B00"/>
<path d="M13.6 7.2 H18.5 L18.4 13.4 L21.2 14.9 V22.6 L20.2 24.1 H11.8 L10.8 22.6 V14.9 L13.6 13.4 Z" fill="#FFFFFF"/>
<circle cx="11.8" cy="12.1" r="1.1" fill="#344563"/><circle cx="20.2" cy="12.1" r="1.1" fill="#344563"/>
<rect x="13.5" y="18.9" width="5" height="2.5" rx="1.2" fill="#344563"/>
<path d="M16 21.2 V23.8 M14.5 24.3 H17.5" stroke="#344563" stroke-width="0.9"/></svg>
<div class="t" style="left:722px;top:594.25px;font-size:14px;line-height:17px;color:#0052CC;-webkit-text-stroke:0.35px #0052CC;letter-spacing:0.615px;">admin</div>
<div class="t" style="left:831.8px;top:594.25px;font-size:14px;line-height:17px;color:#172B4D;letter-spacing:0.113px;">1/23/2024</div>
<svg class="s" style="left:947px;top:586px;" width="32" height="32" viewBox="0 0 32 32"><circle cx="16" cy="16" r="16" fill="#00B8D9"/>
<path d="M9 7.2 H23 L24.3 13 L24.1 22.3 L21.5 24 L19.6 26.9 H12.4 L10.5 24 L7.9 22.3 L7.7 13 Z" fill="#FFAB00"/>
<path d="M5.6 8.5 C5.5 7.2 6.5 6.4 7.7 6.6 L10.6 7.2 L10.6 12.6 L8.3 12.8 C6.8 11.6 5.8 10.1 5.6 8.5 Z" fill="#FF8B00"/>
<path d="M26.4 8.5 C26.5 7.2 25.5 6.4 24.3 6.6 L21.4 7.2 L21.4 12.6 L23.7 12.8 C25.2 11.6 26.2 10.1 26.4 8.5 Z" fill="#FF8B00"/>
<path d="M13.6 7.2 H18.5 L18.4 13.4 L21.2 14.9 V22.6 L20.2 24.1 H11.8 L10.8 22.6 V14.9 L13.6 13.4 Z" fill="#FFFFFF"/>
<circle cx="11.8" cy="12.1" r="1.1" fill="#344563"/><circle cx="20.2" cy="12.1" r="1.1" fill="#344563"/>
<rect x="13.5" y="18.9" width="5" height="2.5" rx="1.2" fill="#344563"/>
<path d="M16 21.2 V23.8 M14.5 24.3 H17.5" stroke="#344563" stroke-width="0.9"/></svg>
<div class="t" style="left:1001.8px;top:594.25px;font-size:14px;line-height:17px;color:#0052CC;-webkit-text-stroke:0.35px #0052CC;letter-spacing:0.39px;">admin</div>
<svg class="s" style="left:1134px;top:586px;" width="32" height="32" viewBox="0 0 32 32"><circle cx="16" cy="16" r="16" fill="#00B8D9"/>
<path d="M9 7.2 H23 L24.3 13 L24.1 22.3 L21.5 24 L19.6 26.9 H12.4 L10.5 24 L7.9 22.3 L7.7 13 Z" fill="#FFAB00"/>
<path d="M5.6 8.5 C5.5 7.2 6.5 6.4 7.7 6.6 L10.6 7.2 L10.6 12.6 L8.3 12.8 C6.8 11.6 5.8 10.1 5.6 8.5 Z" fill="#FF8B00"/>
<path d="M26.4 8.5 C26.5 7.2 25.5 6.4 24.3 6.6 L21.4 7.2 L21.4 12.6 L23.7 12.8 C25.2 11.6 26.2 10.1 26.4 8.5 Z" fill="#FF8B00"/>
<path d="M13.6 7.2 H18.5 L18.4 13.4 L21.2 14.9 V22.6 L20.2 24.1 H11.8 L10.8 22.6 V14.9 L13.6 13.4 Z" fill="#FFFFFF"/>
<circle cx="11.8" cy="12.1" r="1.1" fill="#344563"/><circle cx="20.2" cy="12.1" r="1.1" fill="#344563"/>
<rect x="13.5" y="18.9" width="5" height="2.5" rx="1.2" fill="#344563"/>
<path d="M16 21.2 V23.8 M14.5 24.3 H17.5" stroke="#344563" stroke-width="0.9"/></svg>
<div class="t" style="left:1188px;top:594.25px;font-size:14px;line-height:17px;color:#0052CC;-webkit-text-stroke:0.35px #0052CC;letter-spacing:0.39px;">admin</div>
<div class="t" style="left:1312.3px;top:594.25px;font-size:14px;line-height:17px;color:#172B4D;letter-spacing:0.175px;">1/23/2024</div>
<div class="b" style="left:1421px;top:594px;width:18px;height:16px;background:#0052CC;border-radius:8px;"></div>
<div class="t" style="left:1426.5px;top:595.84px;font-size:12px;line-height:14px;color:#FFFFFF;font-weight:700;letter-spacing:0.812px;">7</div>
<svg class="s" style="left:1511px;top:593px;" width="18" height="18" viewBox="0 0 18 18"><path d="M1.3 3.3 H16.7" stroke="#42526E" stroke-width="1.8" stroke-linecap="round"/><path d="M6.5 2.3 H11.5" stroke="#42526E" stroke-width="1.9" stroke-linecap="round"/><path d="M2.2 5.3 H15.8 L13.9 16.8 H4.1 Z" fill="#42526E"/></svg>
<svg class="s" style="left:1549px;top:592px;" width="6" height="20" viewBox="0 0 6 20"><circle cx="3" cy="3" r="2.1" fill="#42526E"/><circle cx="3" cy="10" r="2.1" fill="#42526E"/><circle cx="3" cy="17" r="2.1" fill="#42526E"/></svg>
<svg class="s" style="left:20.9px;top:655.3px;" width="18" height="18" viewBox="0 0 18 18"><path d="M9.00 1.55 L11.35 6.21 L16.51 7.01 L12.80 10.69 L13.64 15.84 L9.00 13.45 L4.36 15.84 L5.20 10.69 L1.49 7.01 L6.65 6.21 Z" fill="none" stroke="#C4C6CA" stroke-width="1.75" stroke-linejoin="round"/></svg>
<svg class="s" style="left:67px;top:654px;" width="13" height="16" viewBox="0 0 13 16"><rect x="0.8" y="0.4" width="2.3" height="14" rx="1" fill="#172B4D"/><path d="M0.9 0.4 C4 0 8 0.9 11.9 0.8 V8.9 C8 8.9 4.5 7.4 0.9 7.5 Z" fill="#172B4D"/></svg>
<div class="t" style="left:113.5px;top:649.65px;font-size:14px;line-height:17px;color:#0052CC;-webkit-text-stroke:0.35px #0052CC;letter-spacing:0.22px;">Entwicklung</div>
<div class="b" style="left:353px;top:654px;width:58px;height:19px;background:#F4F5F7;border-radius:3px;"></div>
<div class="t" style="left:357.5px;top:655.93px;font-size:13.2px;line-height:16px;color:#172B4D;letter-spacing:-0.516px;">GLOBAL</div>
<div class="t" style="left:473.7px;top:657.03px;font-size:13.2px;line-height:16px;color:#172B4D;letter-spacing:-0.536px;">GLOBAL</div>
<div class="b" style="left:598px;top:657px;width:46px;height:16px;background:#DFE1E6;border-radius:3px;"></div>
<div class="t" style="left:602px;top:658.69px;font-size:11px;line-height:13px;color:#42526E;font-weight:700;letter-spacing:-0.307px;">BESI...</div>
<svg class="s" style="left:668px;top:648px;" width="32" height="32" viewBox="0 0 32 32"><circle cx="16" cy="16" r="16" fill="#00B8D9"/>
<path d="M9 7.2 H23 L24.3 13 L24.1 22.3 L21.5 24 L19.6 26.9 H12.4 L10.5 24 L7.9 22.3 L7.7 13 Z" fill="#FFAB00"/>
<path d="M5.6 8.5 C5.5 7.2 6.5 6.4 7.7 6.6 L10.6 7.2 L10.6 12.6 L8.3 12.8 C6.8 11.6 5.8 10.1 5.6 8.5 Z" fill="#FF8B00"/>
<path d="M26.4 8.5 C26.5 7.2 25.5 6.4 24.3 6.6 L21.4 7.2 L21.4 12.6 L23.7 12.8 C25.2 11.6 26.2 10.1 26.4 8.5 Z" fill="#FF8B00"/>
<path d="M13.6 7.2 H18.5 L18.4 13.4 L21.2 14.9 V22.6 L20.2 24.1 H11.8 L10.8 22.6 V14.9 L13.6 13.4 Z" fill="#FFFFFF"/>
<circle cx="11.8" cy="12.1" r="1.1" fill="#344563"/><circle cx="20.2" cy="12.1" r="1.1" fill="#344563"/>
<rect x="13.5" y="18.9" width="5" height="2.5" rx="1.2" fill="#344563"/>
<path d="M16 21.2 V23.8 M14.5 24.3 H17.5" stroke="#344563" stroke-width="0.9"/></svg>
<div class="t" style="left:722px;top:656.25px;font-size:14px;line-height:17px;color:#0052CC;-webkit-text-stroke:0.35px #0052CC;letter-spacing:0.615px;">admin</div>
<div class="t" style="left:831.8px;top:656.25px;font-size:14px;line-height:17px;color:#172B4D;letter-spacing:0.113px;">1/23/2024</div>
<svg class="s" style="left:947px;top:648px;" width="32" height="32" viewBox="0 0 32 32"><circle cx="16" cy="16" r="16" fill="#00B8D9"/>
<path d="M9 7.2 H23 L24.3 13 L24.1 22.3 L21.5 24 L19.6 26.9 H12.4 L10.5 24 L7.9 22.3 L7.7 13 Z" fill="#FFAB00"/>
<path d="M5.6 8.5 C5.5 7.2 6.5 6.4 7.7 6.6 L10.6 7.2 L10.6 12.6 L8.3 12.8 C6.8 11.6 5.8 10.1 5.6 8.5 Z" fill="#FF8B00"/>
<path d="M26.4 8.5 C26.5 7.2 25.5 6.4 24.3 6.6 L21.4 7.2 L21.4 12.6 L23.7 12.8 C25.2 11.6 26.2 10.1 26.4 8.5 Z" fill="#FF8B00"/>
<path d="M13.6 7.2 H18.5 L18.4 13.4 L21.2 14.9 V22.6 L20.2 24.1 H11.8 L10.8 22.6 V14.9 L13.6 13.4 Z" fill="#FFFFFF"/>
<circle cx="11.8" cy="12.1" r="1.1" fill="#344563"/><circle cx="20.2" cy="12.1" r="1.1" fill="#344563"/>
<rect x="13.5" y="18.9" width="5" height="2.5" rx="1.2" fill="#344563"/>
<path d="M16 21.2 V23.8 M14.5 24.3 H17.5" stroke="#344563" stroke-width="0.9"/></svg>
<div class="t" style="left:1001.8px;top:656.25px;font-size:14px;line-height:17px;color:#0052CC;-webkit-text-stroke:0.35px #0052CC;letter-spacing:0.39px;">admin</div>
<svg class="s" style="left:1134px;top:648px;" width="32" height="32" viewBox="0 0 32 32"><circle cx="16" cy="16" r="16" fill="#00B8D9"/>
<path d="M9 7.2 H23 L24.3 13 L24.1 22.3 L21.5 24 L19.6 26.9 H12.4 L10.5 24 L7.9 22.3 L7.7 13 Z" fill="#FFAB00"/>
<path d="M5.6 8.5 C5.5 7.2 6.5 6.4 7.7 6.6 L10.6 7.2 L10.6 12.6 L8.3 12.8 C6.8 11.6 5.8 10.1 5.6 8.5 Z" fill="#FF8B00"/>
<path d="M26.4 8.5 C26.5 7.2 25.5 6.4 24.3 6.6 L21.4 7.2 L21.4 12.6 L23.7 12.8 C25.2 11.6 26.2 10.1 26.4 8.5 Z" fill="#FF8B00"/>
<path d="M13.6 7.2 H18.5 L18.4 13.4 L21.2 14.9 V22.6 L20.2 24.1 H11.8 L10.8 22.6 V14.9 L13.6 13.4 Z" fill="#FFFFFF"/>
<circle cx="11.8" cy="12.1" r="1.1" fill="#344563"/><circle cx="20.2" cy="12.1" r="1.1" fill="#344563"/>
<rect x="13.5" y="18.9" width="5" height="2.5" rx="1.2" fill="#344563"/>
<path d="M16 21.2 V23.8 M14.5 24.3 H17.5" stroke="#344563" stroke-width="0.9"/></svg>
<div class="t" style="left:1188px;top:656.25px;font-size:14px;line-height:17px;color:#0052CC;-webkit-text-stroke:0.35px #0052CC;letter-spacing:0.39px;">admin</div>
<div class="t" style="left:1312.3px;top:656.25px;font-size:14px;line-height:17px;color:#172B4D;letter-spacing:0.175px;">2/01/2024</div>
<div class="b" style="left:1421px;top:656px;width:18px;height:16px;background:#0052CC;border-radius:8px;"></div>
<div class="t" style="left:1426.5px;top:657.84px;font-size:12px;line-height:14px;color:#FFFFFF;font-weight:700;letter-spacing:0.812px;">6</div>
<svg class="s" style="left:1511px;top:655px;" width="18" height="18" viewBox="0 0 18 18"><path d="M1.3 3.3 H16.7" stroke="#42526E" stroke-width="1.8" stroke-linecap="round"/><path d="M6.5 2.3 H11.5" stroke="#42526E" stroke-width="1.9" stroke-linecap="round"/><path d="M2.2 5.3 H15.8 L13.9 16.8 H4.1 Z" fill="#42526E"/></svg>
<svg class="s" style="left:1549px;top:654px;" width="6" height="20" viewBox="0 0 6 20"><circle cx="3" cy="3" r="2.1" fill="#42526E"/><circle cx="3" cy="10" r="2.1" fill="#42526E"/><circle cx="3" cy="17" r="2.1" fill="#42526E"/></svg>
</body></html>
